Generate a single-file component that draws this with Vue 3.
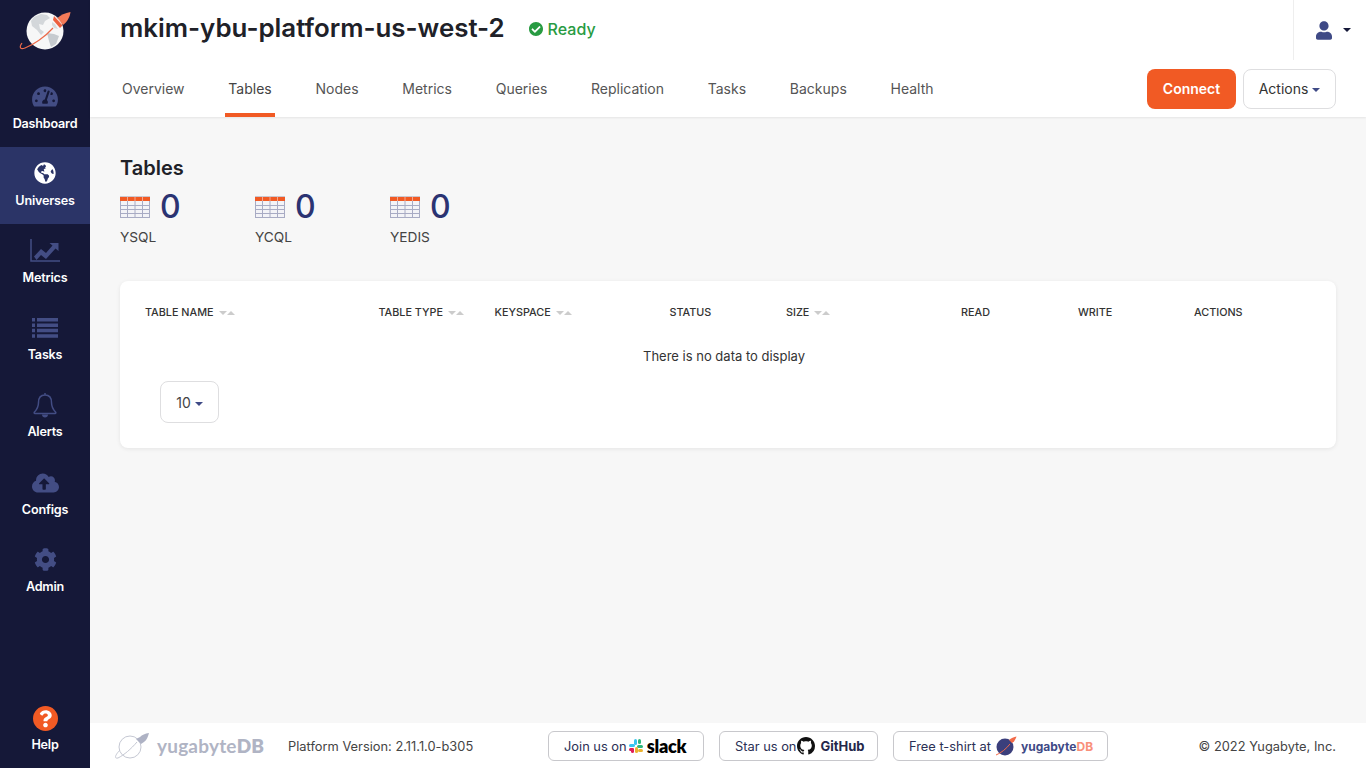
<script setup>
const navItems = [
  { label: 'Dashboard', icon: 'dashboard' },
  { label: 'Universes', icon: 'globe', active: true },
  { label: 'Metrics', icon: 'metrics' },
  { label: 'Tasks', icon: 'tasks' },
  { label: 'Alerts', icon: 'bell' },
  { label: 'Configs', icon: 'cloud' },
  { label: 'Admin', icon: 'cog' },
]
const tabs = ['Overview', 'Tables', 'Nodes', 'Metrics', 'Queries', 'Replication', 'Tasks', 'Backups', 'Health']
const counters = ['YSQL', 'YCQL', 'YEDIS']
const columns = [
  { label: 'TABLE NAME', sort: true },
  { label: 'TABLE TYPE', sort: true },
  { label: 'KEYSPACE', sort: true },
  { label: 'STATUS', cls: 'col-status' },
  { label: 'SIZE', sort: true },
  { label: 'READ' },
  { label: 'WRITE' },
  { label: 'ACTIONS' },
]
</script>

<template>
  <div class="app">
    <aside class="sidebar">
      <div class="brand">
        <svg width="90" height="69" viewBox="0 0 90 69">
          <circle cx="45" cy="31" r="18.500" fill="#f6f7f7" />
          <path d="M34 17l7-3 6 1 3 3-5 3-2 4-4-1 1 5 4 3-3 3-4-5-5-4-1-5z" fill="#d3d7da" />
          <path d="M47 33l7 1 5 2-3 8-5 3-2-6z" fill="#c6cbcf" />
          <path d="M52 22l3 2 3 5-4-1-2-3z" fill="#d8dbdd" />
          <path d="M53 28C45 37 33 45 25 48C20 50 19 47 22 43" fill="none" stroke="#ec6a4a" stroke-width="1.200" />
          <path d="M70.500 12C65 13 60.500 15 57.500 18L63 25C67 22 70 17 70.500 12z" fill="#f37a58" />
          <path d="M54 16L62.500 25.500L60 28L53 20z" fill="#ee5f3d" />
          <path d="M56.500 17.500L62 24" stroke="#f9b09c" stroke-width="0.800" fill="none" />
        </svg>
      </div>
      <nav class="nav">
        <a v-for="item in navItems" :key="item.label" :class="['nav-item', { active: item.active }]">
          <span class="nav-icon">
            <svg v-if="item.icon === 'dashboard'" width="26" height="23" viewBox="0 0 576 512"><path fill="currentColor" d="M288 32C128.94 32 0 160.94 0 320c0 52.8 14.25 102.26 39.06 144.8 5.61 9.62 16.3 15.2 27.44 15.2h443c11.14 0 21.83-5.58 27.44-15.2C561.75 422.26 576 372.8 576 320c0-159.06-128.94-288-288-288zm0 64c14.71 0 26.58 10.13 30.32 23.65-1.11 2.26-2.64 4.23-3.45 6.67l-9.22 27.67c-5.13 3.49-10.97 6.01-17.64 6.01-17.67 0-32-14.33-32-32S270.33 96 288 96zM96 384c-17.67 0-32-14.33-32-32s14.33-32 32-32 32 14.33 32 32-14.33 32-32 32zm48-160c-17.67 0-32-14.33-32-32s14.33-32 32-32 32 14.33 32 32-14.33 32-32 32zm246.77-72.41l-61.33 184C343.13 347.33 352 364.54 352 384c0 11.72-3.38 22.55-8.88 32H232.88c-5.5-9.45-8.88-20.28-8.88-32 0-33.94 26.5-61.43 59.9-63.59l61.34-184.01c4.17-12.56 17.73-19.45 30.36-15.17 12.57 4.19 19.35 17.79 15.17 30.36zm14.66 57.2l15.52-46.55c3.47-1.29 7.13-2.23 11.05-2.23 17.67 0 32 14.33 32 32s-14.33 32-32 32c-11.38-.01-20.89-6.28-26.57-15.22zM480 384c-17.67 0-32-14.33-32-32s14.33-32 32-32 32 14.33 32 32-14.33 32-32 32z" /></svg>
            <svg v-else-if="item.icon === 'globe'" class="globe" width="22" height="22" viewBox="0 0 496 512"><path fill="#fff" d="M248 8C111.03 8 0 119.03 0 256s111.03 248 248 248 248-111.03 248-248S384.97 8 248 8zm82.29 357.6c-3.9 3.88-7.99 7.95-11.31 11.28-2.99 3-5.1 6.7-6.17 10.71-1.51 5.66-2.73 11.38-4.77 16.87l-17.39 46.85c-13.76 3-28 4.69-42.65 4.69v-27.38c1.69-12.62-7.64-36.26-22.63-51.25-6-6-9.37-14.14-9.37-22.63v-32.01c0-11.64-6.27-22.34-16.46-27.97-14.37-7.95-34.81-19.06-48.81-26.11-11.48-5.78-22.1-13.14-31.65-21.75l-.8-.72a114.792 114.792 0 0 1-18.06-20.74c-9.38-13.77-24.66-36.42-34.59-51.14 20.47-45.5 57.36-82.04 103.2-101.89l24.01 12.01C203.48 89.74 216 82.01 216 70.11v-11.3c7.99-1.29 16.12-2.11 24.45-2.41l28.3 28.3c6.25 6.25 6.25 16.38 0 22.63L264 112l-10.34 10.34c-3.12 3.12-3.12 8.19 0 11.31l4.69 4.69c3.12 3.12 3.12 8.19 0 11.31l-8 8a8.008 8.008 0 0 1-5.66 2.34h-8.99c-2.08 0-4.08.81-5.58 2.27l-9.92 9.65a8.008 8.008 0 0 0-1.58 9.31l15.59 31.19c2.66 5.32-1.21 11.58-7.15 11.58h-5.64c-1.93 0-3.79-.7-5.24-1.96l-9.28-8.06a16.017 16.017 0 0 0-15.55-3.1l-31.17 10.39a11.95 11.95 0 0 0-8.17 11.34c0 4.53 2.56 8.66 6.61 10.69l11.08 5.54c9.41 4.71 19.79 7.16 30.31 7.16s22.59 27.29 32 32h66.75c8.49 0 16.62 3.37 22.63 9.37l13.69 13.69a30.503 30.503 0 0 1 8.93 21.57 46.536 46.536 0 0 1-13.72 32.98zM417 274.25c-5.79-1.45-10.84-5-14.15-9.97l-17.98-26.97a23.97 23.97 0 0 1 0-26.62l19.59-29.38c2.32-3.47 5.5-6.29 9.24-8.15l12.98-6.49C440.2 193.59 448 223.87 448 256c0 8.67-.74 17.16-1.82 25.54L417 274.25z" /></svg>
            <svg v-else-if="item.icon === 'metrics'" width="30" height="23" viewBox="0 0 30 23"><path fill="none" stroke="currentColor" stroke-width="1.500" d="M1 0v22h29" /><path fill="currentColor" d="M4 17.500l7-7.500 5 4 6.500-7.500-3-2.500h9v8l-3-2.500-9.500 10.500-5-4-4.500 5z" /></svg>
            <svg v-else-if="item.icon === 'tasks'" width="26" height="20" viewBox="0 0 26 20"><path fill="currentColor" d="M0 0h3v3.500H0zM5 0h21v3.500H5zM0 5.400h3v3.500H0zM5 5.400h21v3.500H5zM0 10.800h3v3.500H0zM5 10.800h21v3.500H5zM0 16.200h3v3.500H0zM5 16.200h21v3.500H5z" /></svg>
            <svg v-else-if="item.icon === 'bell'" width="24" height="26" viewBox="0 0 24 26"><path fill="none" stroke="currentColor" stroke-width="1.500" d="M12 3c-4.500 0-6.500 3.500-6.500 7.500 0 5-2 7.500-4.200 9.800-.4.500 0 1.200.6 1.200h20.200c.6 0 1-.7.6-1.200-2.200-2.300-4.200-4.800-4.200-9.800C18.500 6.500 16.500 3 12 3zM12 1v2" /><path fill="currentColor" d="M9 22.500h6c0 1.800-1.300 3-3 3s-3-1.200-3-3z" /></svg>
            <svg v-else-if="item.icon === 'cloud'" width="27" height="22" viewBox="0 0 640 512"><path fill="currentColor" d="M537.6 226.6c4.1-10.7 6.4-22.4 6.4-34.6 0-53-43-96-96-96-19.7 0-38.1 6-53.3 16.2C367 64.2 315.3 32 256 32c-88.4 0-160 71.6-160 160 0 2.7.1 5.4.2 8.1C40.2 219.8 0 273.2 0 336c0 79.5 64.5 144 144 144h368c70.7 0 128-57.3 128-128 0-61.9-44-113.6-102.4-125.4zM393.4 288H328v112c0 8.8-7.2 16-16 16h-48c-8.8 0-16-7.2-16-16V288h-65.4c-14.3 0-21.4-17.2-11.3-27.3l105.4-105.4c6.2-6.2 16.4-6.2 22.6 0l105.4 105.4c10.1 10.1 2.9 27.3-11.3 27.3z" /></svg>
            <svg v-else width="23" height="23" viewBox="0 0 512 512"><path fill="currentColor" d="M487.4 315.7l-42.6-24.6c4.3-23.2 4.3-47 0-70.2l42.6-24.6c4.9-2.8 7.1-8.6 5.5-14-11.1-35.6-30-67.8-54.7-94.6-3.8-4.1-10-5.1-14.8-2.3L380.8 110c-17.9-15.4-38.5-27.3-60.8-35.1V25.8c0-5.6-3.9-10.5-9.4-11.7-36.7-8.2-74.3-7.8-109.2 0-5.5 1.2-9.4 6.1-9.4 11.7V75c-22.2 7.9-42.8 19.8-60.8 35.1L88.7 85.5c-4.9-2.8-11-1.9-14.8 2.3-24.7 26.7-43.6 58.9-54.7 94.6-1.7 5.4.6 11.2 5.5 14L67.3 221c-4.3 23.2-4.3 47 0 70.2l-42.6 24.6c-4.9 2.8-7.1 8.6-5.5 14 11.1 35.6 30 67.8 54.7 94.6 3.8 4.1 10 5.1 14.8 2.3l42.6-24.6c17.9 15.4 38.5 27.3 60.8 35.1v49.2c0 5.6 3.9 10.5 9.4 11.7 36.7 8.2 74.3 7.8 109.2 0 5.5-1.2 9.4-6.1 9.4-11.7v-49.2c22.2-7.9 42.8-19.8 60.8-35.1l42.6 24.6c4.9 2.8 11 1.9 14.8-2.3 24.7-26.7 43.6-58.9 54.7-94.6 1.5-5.5-.7-11.3-5.6-14.1zM256 336c-44.1 0-80-35.9-80-80s35.9-80 80-80 80 35.9 80 80-35.9 80-80 80z" /></svg>
          </span>
          <span class="nav-label">{{ item.label }}</span>
        </a>
      </nav>
      <a class="nav-item help">
        <span class="nav-icon">
          <svg width="25" height="25" viewBox="8 8 496 496"><path fill="#f15a24" d="M8 256a248 248 0 1 0 496 0a248 248 0 1 0-496 0z" /><path fill="#fff" d="M262.655 90c-54.497 0-89.255 22.957-116.549 63.758-3.536 5.286-2.353 12.415 2.715 16.258l34.699 26.31c5.205 3.947 12.621 3.008 16.665-2.122 17.864-22.658 30.113-35.797 57.303-35.797 20.429 0 45.698 13.148 45.698 32.958 0 14.976-12.363 22.667-32.534 33.976C247.128 238.528 216 254.941 216 296v4c0 6.627 5.373 12 12 12h56c6.627 0 12-5.373 12-12v-1.333c0-28.462 83.186-29.647 83.186-106.667 0-58.002-60.165-102-116.531-102zM256 338c-25.365 0-46 20.635-46 46 0 25.364 20.635 46 46 46s46-20.636 46-46c0-25.365-20.635-46-46-46z" /></svg>
        </span>
        <span class="nav-label">Help</span>
      </a>
    </aside>

    <div class="main">
      <header class="header">
        <div class="title-row">
          <h1 class="title">mkim-ybu-platform-us-west-2</h1>
          <span class="status">
            <svg width="14" height="14" viewBox="8 8 496 496"><path fill="#289b42" d="M504 256c0 136.967-111.033 248-248 248S8 392.967 8 256 119.033 8 256 8s248 111.033 248 248zM227.314 387.314l184-184c6.248-6.248 6.248-16.379 0-22.627l-22.627-22.627c-6.248-6.249-16.379-6.25-22.628 0L216 308.118l-70.059-70.059c-6.248-6.248-16.379-6.248-22.628 0l-22.627 22.627c-6.248 6.248-6.248 16.379 0 22.627l104 104c6.249 6.249 16.379 6.249 22.628.001z" /></svg>
            Ready
          </span>
          <div class="user">
            <svg width="16" height="19" viewBox="0 0 448 512"><path fill="#3f4a86" d="M224 256c70.7 0 128-57.3 128-128S294.7 0 224 0 96 57.3 96 128s57.3 128 128 128zm89.6 32h-16.7c-22.2 10.2-46.900 16-72.900 16s-50.600-5.800-72.900-16h-16.700C60.200 288 0 348.200 0 422.400V464c0 26.500 21.500 48 48 48h352c26.500 0 48-21.500 48-48v-41.600c0-74.200-60.200-134.400-134.400-134.400z" /></svg>
            <span class="caret caret-dark"></span>
          </div>
        </div>
        <div class="tab-row">
          <nav class="tabs">
            <a v-for="tab in tabs" :key="tab" :class="['tab', { 'tab-active': tab === 'Tables' }]">{{ tab }}</a>
          </nav>
          <div class="tab-actions">
            <button class="btn btn-primary" type="button">Connect</button>
            <button class="btn btn-default" type="button">Actions <span class="caret caret-blue"></span></button>
          </div>
        </div>
      </header>

      <main class="content">
        <h2 class="page-title">Tables</h2>
        <div class="counters">
          <div v-for="c in counters" :key="c" class="counter">
            <div class="counter-top">
              <svg width="30" height="22" viewBox="0 0 30 22">
                <rect width="30" height="22" fill="#f3f3f7" />
                <path d="M0 .5h30" stroke="#c9c9d2" stroke-width="1" />
                <rect y="1" width="30" height="4" fill="#f15a24" />
                <path d="M0 9.500h30M0 13.500h30M0 17.500h30M0 21.500h30M.5 5v17M7.500 5v17M15 5v17M22.500 5v17M29.500 5v17" stroke="#a8abc4" stroke-width="1" fill="none" />
                <path d="M7.500 1v4M15 1v4M22.500 1v4" stroke="#f9a58a" stroke-width="1" />
              </svg>
              <span class="counter-num">0</span>
            </div>
            <div class="counter-label">{{ c }}</div>
          </div>
        </div>

        <section class="card">
          <div class="table-head">
            <div v-for="col in columns" :key="col.label" :class="['th', col.cls]">
              {{ col.label }}
              <span v-if="col.sort" class="sort"><i class="sort-down"></i><i class="sort-up"></i></span>
            </div>
          </div>
          <div class="empty">There is no data to display</div>
          <button class="page-size" type="button">10 <span class="caret caret-blue"></span></button>
        </section>
      </main>

      <footer class="footer">
        <div class="foot-logo">
          <svg width="36" height="28" viewBox="0 0 36 28">
            <circle cx="15" cy="15" r="11" fill="#fff" stroke="#c5c8d3" stroke-width="1" />
            <path d="M22 10C16 17 9 23 3 26C-1 27 0 23 5 18" fill="none" stroke="#c5c8d3" stroke-width="1" />
            <path d="M21 7l5 5 3-2c3-2 4-6 5-9-4 .5-7 2-9 4z" fill="#aeb2c4" />
          </svg>
          <span class="foot-brand">yugabyte<b>DB</b></span>
        </div>
        <span class="version">Platform Version: 2.11.1.0-b305</span>
        <div class="foot-links">
          <a class="foot-btn btn-slack">
            Join us on
            <svg class="slack-mark" width="14" height="14" viewBox="0 0 14 14">
              <rect x="5" y="0" width="3" height="6" rx="1.500" fill="#36c5f0" />
              <rect x="0" y="5" width="6" height="3" rx="1.500" fill="#36c5f0" />
              <rect x="8" y="6" width="6" height="3" rx="1.500" fill="#2eb67d" />
              <rect x="9" y="0" width="3" height="5" rx="1.500" fill="#2eb67d" />
              <rect x="6" y="8" width="3" height="6" rx="1.500" fill="#ecb22e" />
              <rect x="9" y="10" width="5" height="3" rx="1.500" fill="#ecb22e" />
              <rect x="0" y="9" width="5" height="3" rx="1.500" fill="#e01e5a" />
              <rect x="2" y="9" width="3" height="5" rx="1.500" fill="#e01e5a" />
            </svg>
            <b class="slack-word">slack</b>
          </a>
          <a class="foot-btn btn-github">
            Star us on
            <svg class="gh-mark" width="18" height="18" viewBox="0 0 16 16"><path fill="#111" d="M8 0C3.58 0 0 3.58 0 8c0 3.54 2.29 6.53 5.47 7.59.4.07.55-.17.55-.38 0-.19-.01-.82-.01-1.49-2.01.37-2.53-.49-2.69-.94-.09-.23-.48-.94-.82-1.13-.28-.15-.68-.52-.01-.53.63-.01 1.08.58 1.23.82.72 1.21 1.87.87 2.33.66.07-.52.28-.87.51-1.07-1.78-.2-3.64-.89-3.64-3.95 0-.87.31-1.59.82-2.15-.08-.2-.36-1.02.08-2.12 0 0 .67-.21 2.2.82.64-.18 1.32-.27 2-.27.68 0 1.36.09 2 .27 1.53-1.04 2.2-.82 2.2-.82.44 1.1.16 1.92.08 2.12.51.56.82 1.27.82 2.15 0 3.07-1.87 3.75-3.65 3.95.29.25.54.73.54 1.48 0 1.07-.01 1.93-.01 2.2 0 .21.15.46.55.38A8.013 8.013 0 0016 8c0-4.42-3.58-8-8-8z" /></svg>
            <b class="gh-word">GitHub</b>
          </a>
          <a class="foot-btn btn-shirt">
            Free t-shirt at
            <svg class="shirt-mark" width="22" height="20" viewBox="0 0 22 20">
              <circle cx="10" cy="11" r="8.500" fill="#3b3f7c" />
              <path d="M14 4l3 3 2-1.500c1-1.500 2-3.500 2.500-5-2.500.5-5.500 1.500-7.500 3.500z" fill="#f26b4a" />
              <path d="M15 8C11 13 6 17 1 19" fill="none" stroke="#f26b4a" stroke-width="1" />
            </svg>
            <b class="yb-word">yugabyte<em>DB</em></b>
          </a>
        </div>
        <span class="copyright">© 2022 Yugabyte, Inc.</span>
      </footer>
    </div>
  </div>
</template>

<style>
html, body {
  margin: 0;
  background: #f7f7f7;
}
</style>

<style scoped>
.app {
  display: flex;
  height: 100vh;
  overflow: hidden;
  font-family: Inter, "Liberation Sans", sans-serif;
  color: #333;
}

.sidebar {
  width: 90px;
  flex-shrink: 0;
  background: #151838;
  display: flex;
  flex-direction: column;
}

.brand {
  height: 69.600px;
}

.brand svg {
  display: block;
}

.nav {
  flex: 1;
}

.nav-item {
  height: 77.200px;
  display: flex;
  flex-direction: column;
  align-items: center;
  color: #fff;
  box-sizing: border-box;
  padding-top: 14px;
}

.nav-item.active {
  background: #2b3467;
}

.nav-icon {
  height: 26px;
  display: flex;
  align-items: center;
  justify-content: center;
  color: #434d84;
}

.globe {
  margin-bottom: 2px;
}

.nav-label {
  margin-top: 5px;
  font-size: 12.600px;
  font-weight: 600;
  line-height: 17px;
  letter-spacing: -0.2px;
}

.help {
  height: 68px;
  padding-top: 5px;
}

.main {
  flex: 1;
  min-width: 0;
  display: flex;
  flex-direction: column;
}

.header {
  background: #fff;
  height: 117px;
  flex-shrink: 0;
  box-shadow: 0 1px 2px rgba(0, 0, 0, 0.08);
  position: relative;
}

.title-row {
  height: 60px;
  display: flex;
  align-items: flex-start;
  padding-left: 30px;
}

.title {
  margin: 12px 0 0;
  font-size: 25.870px;
  line-height: 32px;
  font-weight: 600;
  color: #202128;
}

.status {
  margin: 20px 0 0 24px;
  display: flex;
  align-items: center;
  gap: 5px;
  font-size: 16px;
  line-height: 18px;
  font-weight: 500;
  color: #289b42;
}

.user {
  margin-left: auto;
  width: 73px;
  height: 60px;
  border-left: 1px solid #eeeeee;
  box-sizing: border-box;
  display: flex;
  align-items: center;
  padding-left: 22px;
  gap: 11px;
}

.tab-row {
  height: 57px;
  display: flex;
  justify-content: space-between;
  padding: 0 30px 0 29px;
}

.tabs {
  display: flex;
  gap: 37.750px;
}

.tab {
  padding: 0 3px;
  height: 57px;
  line-height: 58px;
  font-size: 14px;
  color: #555;
  box-sizing: border-box;
}

.tab-active {
  color: #444;
  box-shadow: inset 0 -4px 0 #f15a24;
}

.tab-actions {
  display: flex;
  gap: 7px;
  padding-top: 9px;
}

.btn {
  height: 40px;
  border-radius: 8px;
  font-family: inherit;
  font-size: 14px;
  padding: 0 0 2px;
  box-sizing: border-box;
}

.btn-primary {
  width: 89px;
  background: #f15a24;
  border: 0;
  color: #fff;
  font-weight: 600;
}

.btn-default {
  width: 93px;
  background: #fff;
  border: 1px solid #dedee0;
  color: #333;
}

.caret {
  display: inline-block;
  width: 0;
  height: 0;
  border-left: 4px solid transparent;
  border-right: 4px solid transparent;
  vertical-align: middle;
}

.caret-blue {
  border-top: 4px solid #3f4a86;
}

.caret-dark {
  border-top: 4px solid #151838;
}

.content {
  flex: 1;
  min-height: 0;
  padding: 0 30px;
}

.page-title {
  margin: 38px 0 0;
  font-size: 20px;
  line-height: 26px;
  font-weight: 600;
  color: #202128;
}

.counters {
  display: flex;
  margin-top: 8px;
}

.counter {
  width: 135px;
}

.counter-top {
  display: flex;
  align-items: center;
  gap: 10px;
  height: 36px;
}

.counter-num {
  font-size: 32px;
  line-height: 36px;
  font-weight: 500;
  color: #2b3372;
}

.counter-label {
  margin-top: 2px;
  font-size: 13.700px;
  line-height: 20px;
  color: #444;
}

.card {
  margin-top: 34px;
  height: 167px;
  background: #fff;
  border-radius: 8px;
  box-shadow: 0 1px 4px rgba(0, 0, 0, 0.08);
  box-sizing: border-box;
  padding-top: 24px;
}

.table-head {
  display: grid;
  grid-template-columns: 233.500px 116px 116px 175.500px 175px 117px 116px 1fr;
  padding-left: 25px;
  height: 16px;
}

.th {
  display: flex;
  align-items: center;
  gap: 5px;
  font-size: 10.800px;
  line-height: 16px;
  font-weight: 500;
  color: #333;
  white-space: nowrap;
}

.col-status {
  padding-left: 59px;
}

.sort {
  display: flex;
  align-items: center;
}

.sort i {
  display: block;
  width: 0;
  height: 0;
  border-left: 4px solid transparent;
  border-right: 4px solid transparent;
}

.sort-down {
  border-top: 4px solid #ccc;
}

.sort-up {
  border-bottom: 4px solid #ccc;
}

.empty {
  margin-top: 26px;
  padding-right: 8px;
  text-align: center;
  font-size: 13px;
  line-height: 18px;
  color: #333;
}

.page-size {
  display: block;
  margin: 16px 0 0 40px;
  width: 59px;
  height: 42px;
  background: #fff;
  border: 1px solid #dedee0;
  border-radius: 8px;
  font-family: inherit;
  font-size: 14px;
  color: #444;
  padding: 0;
}

.footer {
  height: 45px;
  flex-shrink: 0;
  background: #fff;
  display: flex;
  align-items: center;
  font-size: 12.850px;
  color: #444;
  padding-left: 25px;
  padding-right: 30px;
}

.foot-logo {
  width: 173px;
  display: flex;
  align-items: center;
  gap: 6px;
}

.foot-brand {
  font-size: 19px;
  font-weight: 700;
  color: #b0b4c4;
  font-family: Lato, Inter, sans-serif;
  letter-spacing: 0.2px;
}

.foot-brand b {
  font-weight: 800;
}

.version {
  width: 260px;
  padding-top: 2px;
  white-space: nowrap;
}

.foot-links {
  display: flex;
  gap: 15px;
}

.foot-btn {
  height: 30px;
  box-sizing: border-box;
  border: 1px solid #c8c8cc;
  border-radius: 6px;
  display: flex;
  align-items: center;
  padding: 1px 0 0 15px;
  color: #2b3055;
  white-space: nowrap;
}

.btn-slack {
  width: 156px;
}

.btn-github {
  width: 159px;
}

.btn-shirt {
  width: 215px;
}

.slack-mark {
  margin: 0 4px 0 2px;
}

.slack-word {
  font-size: 18px;
  font-weight: 800;
  color: #000;
  font-family: Lato, Inter, sans-serif;
  letter-spacing: -0.2px;
}

.gh-mark {
  margin: 0 5px 0 1px;
}

.gh-word {
  font-size: 13px;
  font-weight: 700;
  color: #24274a;
}

.shirt-mark {
  margin: 0 4px 0 4px;
}

.yb-word {
  font-size: 12px;
  font-weight: 700;
  color: #3f4a86;
}

.yb-word em {
  font-style: normal;
  color: #f9907a;
}

.copyright {
  margin-left: auto;
  padding-top: 2px;
  white-space: nowrap;
}
</style>
